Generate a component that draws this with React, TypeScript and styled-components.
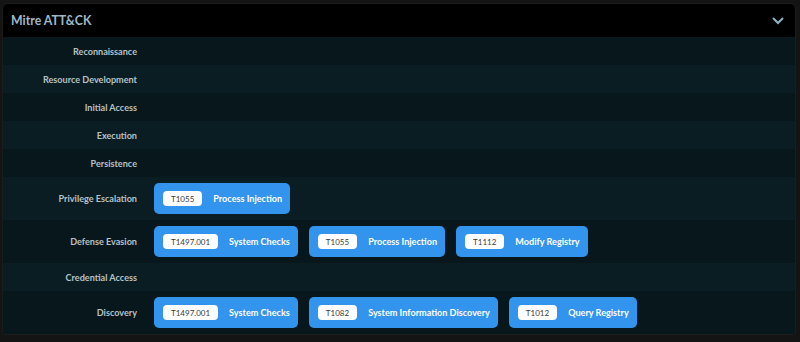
import React from "react";
import styled, { createGlobalStyle } from "styled-components";

type Technique = { id: string; name: string };
type Tactic = { name: string; techniques: Technique[] };

const tactics: Tactic[] = [
  { name: "Reconnaissance", techniques: [] },
  { name: "Resource Development", techniques: [] },
  { name: "Initial Access", techniques: [] },
  { name: "Execution", techniques: [] },
  { name: "Persistence", techniques: [] },
  {
    name: "Privilege Escalation",
    techniques: [{ id: "T1055", name: "Process Injection" }],
  },
  {
    name: "Defense Evasion",
    techniques: [
      { id: "T1497.001", name: "System Checks" },
      { id: "T1055", name: "Process Injection" },
      { id: "T1112", name: "Modify Registry" },
    ],
  },
  { name: "Credential Access", techniques: [] },
  {
    name: "Discovery",
    techniques: [
      { id: "T1497.001", name: "System Checks" },
      { id: "T1082", name: "System Information Discovery" },
      { id: "T1012", name: "Query Registry" },
    ],
  },
];

const GlobalStyle = createGlobalStyle`
  html, body {
    margin: 0;
    padding: 0;
    background: #141414;
    font-family: Lato, "Open Sans", sans-serif;
  }
`;

const Page = styled.div`
  padding: 4px 5px 8px 3px;
`;

const Card = styled.section`
  background: #08171b;
  border-radius: 5px 5px 2px 2px;
  overflow: hidden;
  box-shadow: 0 0 0 1px #1c1c1c;
`;

const Header = styled.header`
  height: 33px;
  background: #000;
  display: flex;
  align-items: center;
  justify-content: space-between;
  padding: 0 11px 0 8px;
`;

const Title = styled.h2`
  margin: 0;
  font-size: 12.3px;
  font-weight: 700;
  color: #9dbac8;
`;

const Row = styled.div<{ $alt: boolean }>`
  display: grid;
  grid-template-columns: 134px 1fr;
  column-gap: 17px;
  align-items: center;
  min-height: 28px;
  padding: 6px 0;
  box-sizing: border-box;
  background: ${(p) => (p.$alt ? "#0a1d23" : "#08171b")};
`;

const Label = styled.div`
  text-align: right;
  font-size: 9.1px;
  line-height: 11px;
  font-weight: 700;
  color: #b8c2c6;
`;

const Techniques = styled.div`
  display: flex;
  flex-wrap: wrap;
  gap: 11px;
`;

const Badge = styled.div`
  display: flex;
  align-items: center;
  gap: 11px;
  height: 31px;
  padding: 0 8px 0 9px;
  border-radius: 5px;
  background: #3294ec;
`;

const Code = styled.span`
  display: inline-flex;
  align-items: center;
  justify-content: center;
  height: 15px;
  padding: 0 8px;
  border-radius: 4px;
  background: #fff;
  color: #3a3a3a;
  font-size: 8px;
`;

const Name = styled.span`
  font-size: 9.1px;
  font-weight: 700;
  color: #fff;
`;

const Chevron = () => (
  <svg width="12" height="8" viewBox="0 0 12 8" fill="none">
    <path d="M1.5 1.5 6 6l4.5-4.5" stroke="#8fb4c6" strokeWidth="2" strokeLinecap="round" />
  </svg>
);

export default function App() {
  return (
    <>
      <GlobalStyle />
      <Page>
        <Card>
          <Header>
            <Title>Mitre ATT&amp;CK</Title>
            <Chevron />
          </Header>
          {tactics.map((t, i) => (
            <Row key={t.name} $alt={i % 2 === 1}>
              <Label>{t.name}</Label>
              <Techniques>
                {t.techniques.map((tech) => (
                  <Badge key={tech.id + tech.name}>
                    <Code>{tech.id}</Code>
                    <Name>{tech.name}</Name>
                  </Badge>
                ))}
              </Techniques>
            </Row>
          ))}
        </Card>
      </Page>
    </>
  );
}
